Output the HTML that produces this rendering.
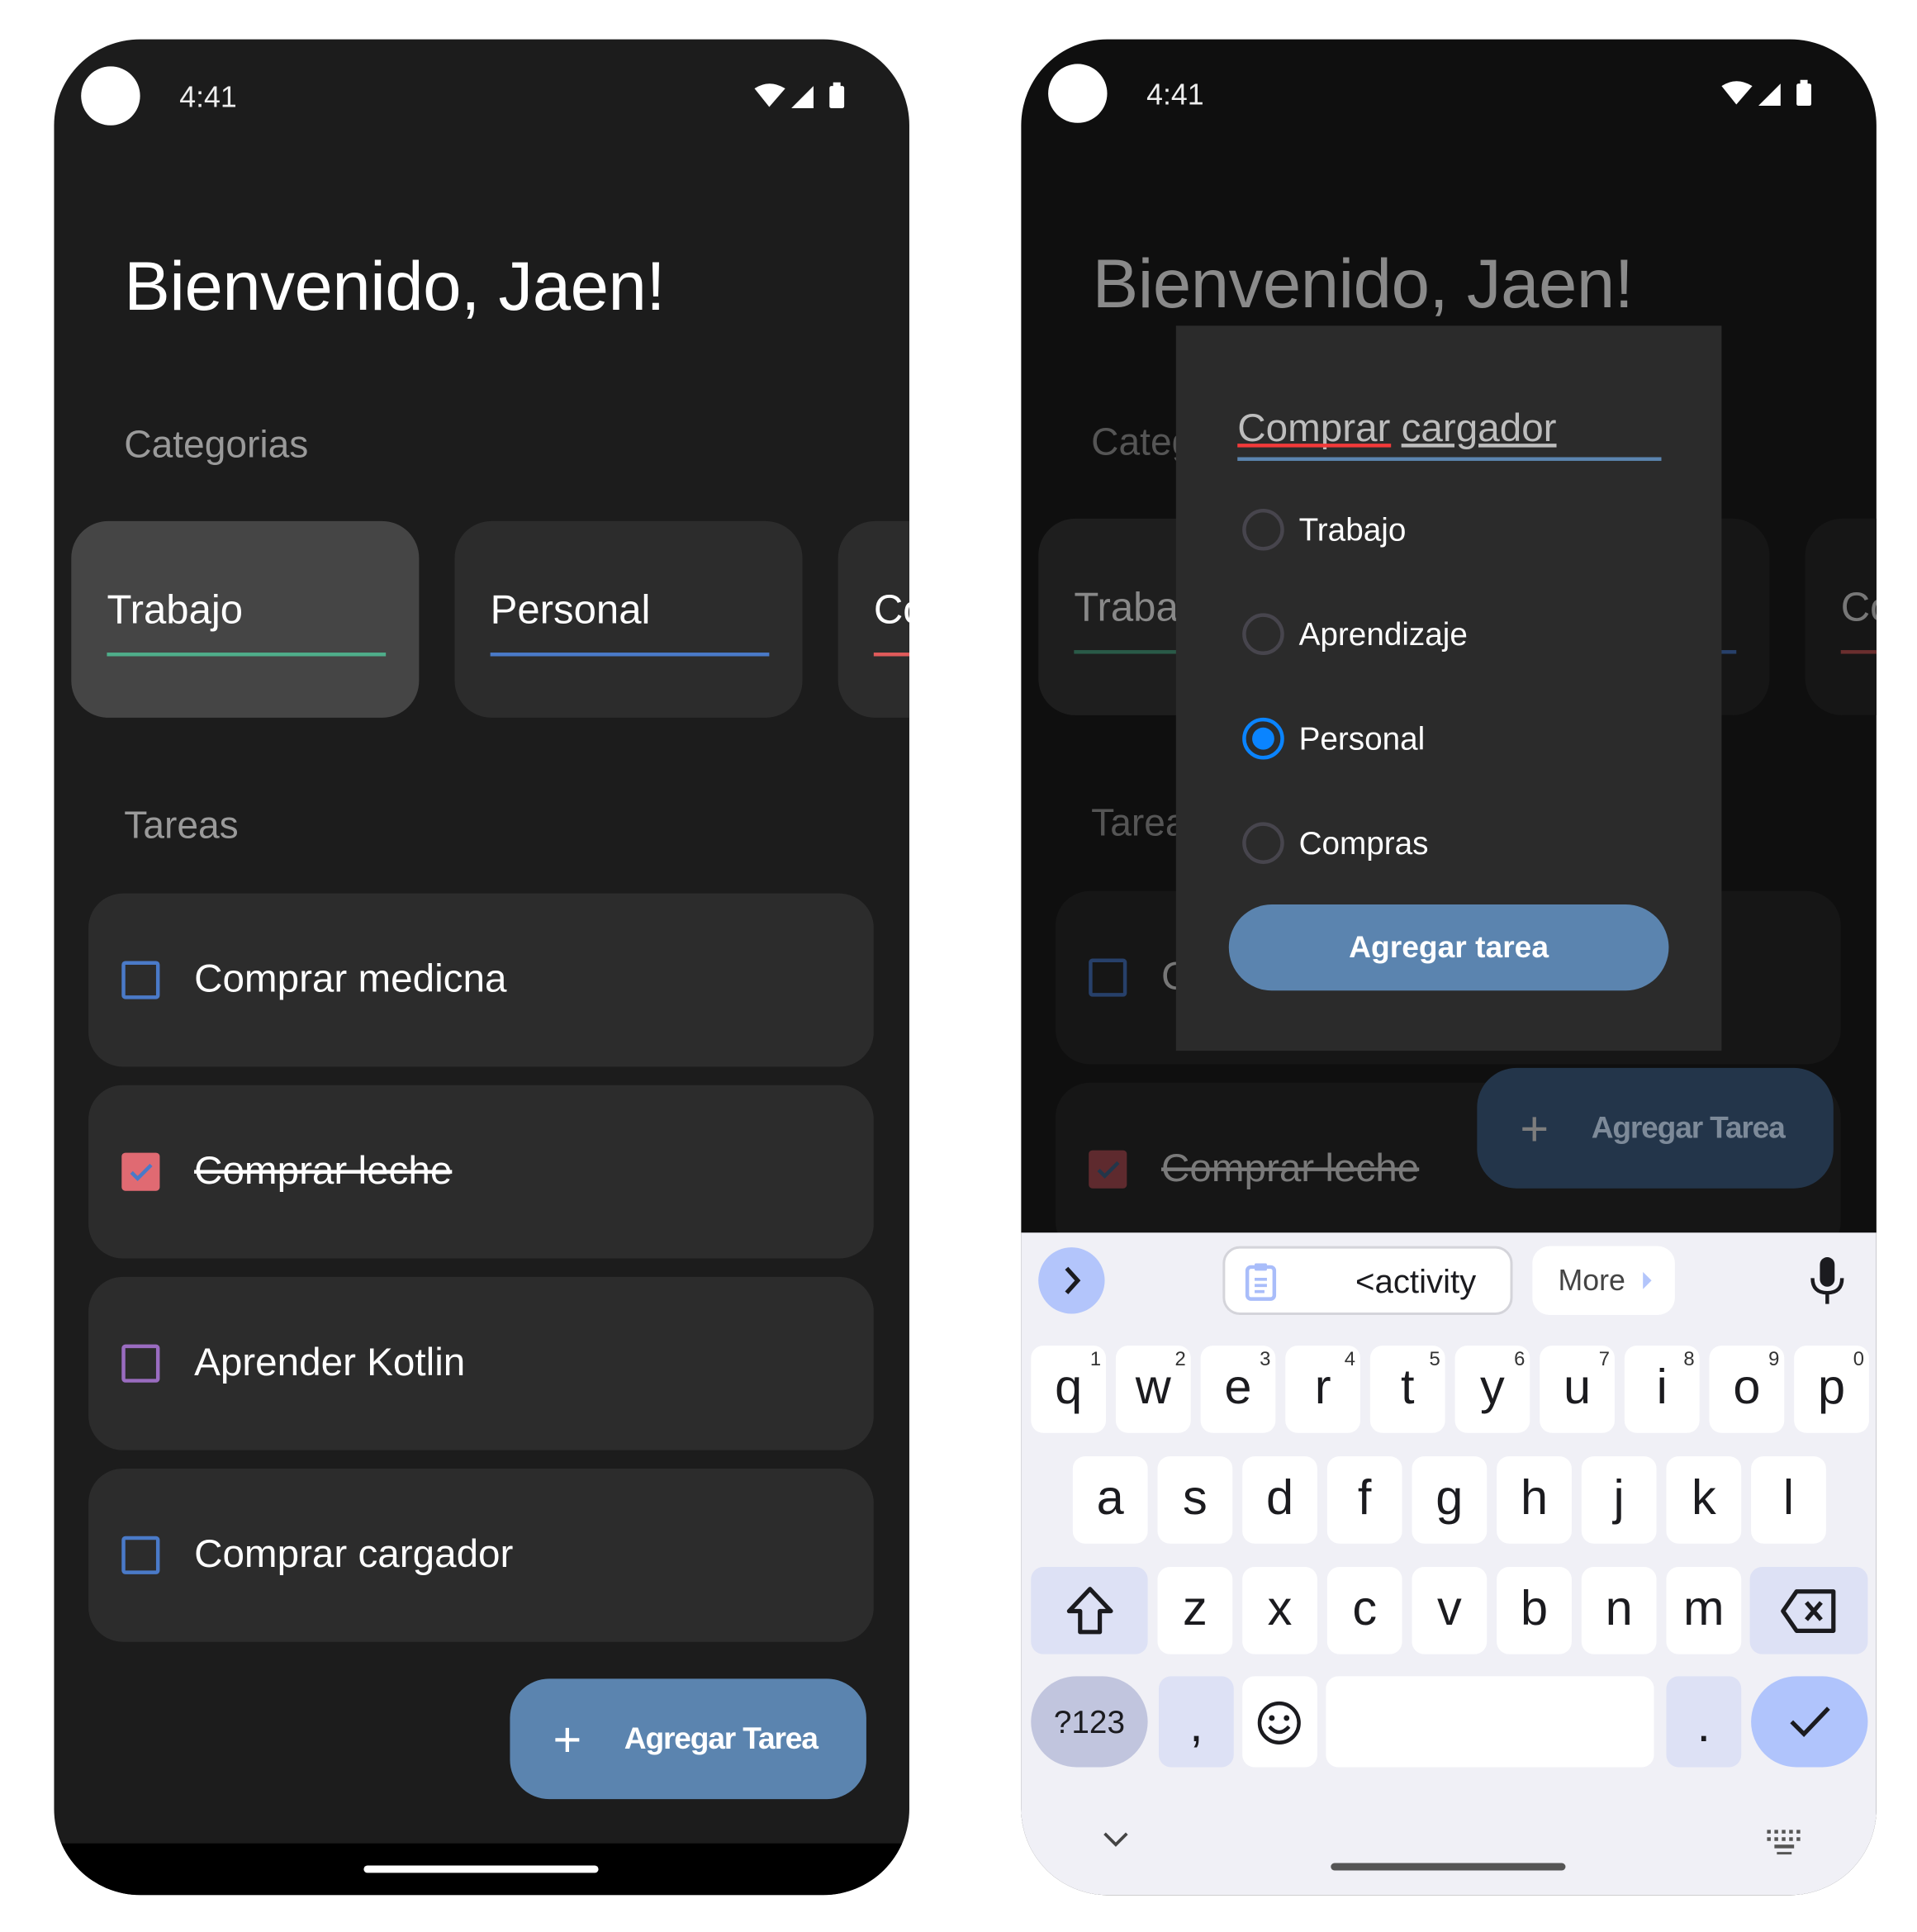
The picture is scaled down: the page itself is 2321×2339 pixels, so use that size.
<!DOCTYPE html>
<html><head><meta charset="utf-8">
<style>
*{margin:0;padding:0;box-sizing:border-box}
html,body{width:2321px;height:2336px;overflow:hidden;background:#fff}
#w{position:absolute;left:0;top:3px;width:1560px;height:1570px;transform:scale(1.4878);transform-origin:0 0;font-family:"Liberation Sans",Arial,sans-serif}
.a{position:absolute}
.phone{position:absolute;top:30px;width:696px;height:1510px;border-radius:70px;overflow:hidden}
.t{position:absolute;white-space:nowrap;line-height:1}
.key{position:absolute;background:#fff;border-radius:10px;width:61px;height:71px;color:#1b1b1f;font-size:40px;text-align:center;line-height:68px}
.key sup{position:absolute;right:4px;top:4px;font-size:16px;line-height:1;color:#333}
.fab{letter-spacing:-0.8px}
</style></head><body><div id="w">

<!-- LEFT PHONE -->
<div class="phone" style="left:44px;background:#1c1c1c">
  <div class="a" style="left:22px;top:22px;width:48px;height:48px;border-radius:50%;background:#fff"></div>
  <div class="t" style="left:102px;top:36px;font-size:24px;color:#eee">4:41</div>
  <svg class="a" style="left:568px;top:34px" width="84" height="26" viewBox="0 0 84 26">
    <path d="M2 6 Q14 -2 27 6 L14 21 Z" fill="#fff"/>
    <path d="M32 22 L50 4 L50 22 Z" fill="#fff"/>
    <rect x="63" y="4" width="12" height="18" rx="1.5" fill="#fff"/><rect x="66" y="1" width="6" height="4" fill="#fff"/>
  </svg>
  <div class="t" style="left:57px;top:173px;font-size:56px;color:#fff;letter-spacing:-0.3px">Bienvenido, Jaen!</div>
  <div class="t" style="left:57px;top:314px;font-size:31px;color:#9a9a9a">Categorias</div>

  <div class="a" style="left:14px;top:392px;width:283px;height:160px;border-radius:30px;background:#454545"></div>
  <div class="t" style="left:43px;top:447px;font-size:33px;color:#fff">Trabajo</div>
  <div class="a" style="left:43px;top:499px;width:227px;height:3px;background:#4fae8a"></div>

  <div class="a" style="left:326px;top:392px;width:283px;height:160px;border-radius:30px;background:#2c2c2c"></div>
  <div class="t" style="left:355px;top:447px;font-size:33px;color:#fff">Personal</div>
  <div class="a" style="left:355px;top:499px;width:227px;height:3px;background:#4a7ac8"></div>

  <div class="a" style="left:638px;top:392px;width:283px;height:160px;border-radius:30px;background:#2c2c2c"></div>
  <div class="t" style="left:667px;top:447px;font-size:33px;color:#fff">Co</div>
  <div class="a" style="left:667px;top:499px;width:227px;height:3px;background:#e05a5a"></div>

  <div class="t" style="left:57px;top:624px;font-size:31px;color:#9a9a9a">Tareas</div>

  <div class="a" style="left:28px;top:695px;width:639px;height:141px;border-radius:28px;background:#2c2c2c"></div>
  <div class="a" style="left:55px;top:750px;width:31px;height:31px;border:3px solid #4a7ac8;border-radius:3px"></div>
  <div class="t" style="left:114px;top:748px;font-size:32px;color:#fff">Comprar medicna</div>

  <div class="a" style="left:28px;top:851px;width:639px;height:141px;border-radius:28px;background:#2c2c2c"></div>
  <div class="a" style="left:55px;top:906px;width:31px;height:31px;background:#e06a72;border-radius:3px"></div>
  <svg class="a" style="left:55px;top:906px" width="31" height="31"><path d="M8 16 L13 21 L24 10" stroke="#4a7ac8" stroke-width="3" fill="none"/></svg>
  <div class="t" style="left:114px;top:904px;font-size:32px;color:#fff;text-decoration:line-through">Comprar leche</div>

  <div class="a" style="left:28px;top:1007px;width:639px;height:141px;border-radius:28px;background:#2c2c2c"></div>
  <div class="a" style="left:55px;top:1062px;width:31px;height:31px;border:3px solid #9a6cc0;border-radius:3px"></div>
  <div class="t" style="left:114px;top:1060px;font-size:32px;color:#fff">Aprender Kotlin</div>

  <div class="a" style="left:28px;top:1163px;width:639px;height:141px;border-radius:28px;background:#2c2c2c"></div>
  <div class="a" style="left:55px;top:1218px;width:31px;height:31px;border:3px solid #4a7ac8;border-radius:3px"></div>
  <div class="t" style="left:114px;top:1216px;font-size:32px;color:#fff">Comprar cargador</div>

  <div class="a" style="left:371px;top:1334px;width:290px;height:98px;border-radius:32px;background:#5b84af"></div>
  <div class="t" style="left:406px;top:1364px;font-size:40px;color:#fff">+</div>
  <div class="t fab" style="left:464px;top:1371px;font-size:25px;color:#fff;font-weight:bold">Agregar Tarea</div>

  <div class="a" style="left:0;top:1468px;width:696px;height:42px;background:#000"></div>
  <div class="a" style="left:252px;top:1486px;width:191px;height:6px;border-radius:3px;background:#fff"></div>
</div>

<!-- RIGHT PHONE -->
<div class="phone" style="left:831px;background:#0f0f0f">
  <div class="a" style="left:22px;top:20px;width:48px;height:48px;border-radius:50%;background:#fff"></div>
  <div class="t" style="left:102px;top:34px;font-size:24px;color:#eee">4:41</div>
  <svg class="a" style="left:568px;top:32px" width="84" height="26" viewBox="0 0 84 26">
    <path d="M2 6 Q14 -2 27 6 L14 21 Z" fill="#fff"/>
    <path d="M32 22 L50 4 L50 22 Z" fill="#fff"/>
    <rect x="63" y="4" width="12" height="18" rx="1.5" fill="#fff"/><rect x="66" y="1" width="6" height="4" fill="#fff"/>
  </svg>
  <div class="t" style="left:58px;top:171px;font-size:56px;color:#8a8a8a;letter-spacing:-0.3px">Bienvenido, Jaen!</div>
  <div class="t" style="left:57px;top:312px;font-size:31px;color:#555">Categorias</div>

  <div class="a" style="left:14px;top:390px;width:283px;height:160px;border-radius:30px;background:#1e1e1e"></div>
  <div class="t" style="left:43px;top:445px;font-size:33px;color:#888">Trabajo</div>
  <div class="a" style="left:43px;top:497px;width:227px;height:3px;background:#2a5a48"></div>
  <div class="a" style="left:326px;top:390px;width:283px;height:160px;border-radius:30px;background:#161616"></div>
  <div class="a" style="left:355px;top:497px;width:227px;height:3px;background:#27406a"></div>
  <div class="a" style="left:638px;top:390px;width:283px;height:160px;border-radius:30px;background:#161616"></div>
  <div class="t" style="left:667px;top:445px;font-size:33px;color:#777">Co</div>
  <div class="a" style="left:667px;top:497px;width:227px;height:3px;background:#6a2e2e"></div>

  <div class="t" style="left:57px;top:622px;font-size:31px;color:#555">Tareas</div>
  <div class="a" style="left:28px;top:693px;width:639px;height:141px;border-radius:28px;background:#161616"></div>
  <div class="a" style="left:55px;top:748px;width:31px;height:31px;border:3px solid #27406a;border-radius:3px"></div>
  <div class="t" style="left:114px;top:746px;font-size:32px;color:#777">Comprar medicna</div>
  <div class="a" style="left:28px;top:849px;width:639px;height:141px;border-radius:28px;background:#161616"></div>
  <div class="a" style="left:55px;top:904px;width:31px;height:31px;background:#5e2a2e;border-radius:3px"></div>
  <svg class="a" style="left:55px;top:904px" width="31" height="31"><path d="M8 16 L13 21 L24 10" stroke="#23364a" stroke-width="3" fill="none"/></svg>
  <div class="t" style="left:114px;top:902px;font-size:32px;color:#7a7a7a;text-decoration:line-through">Comprar leche</div>

  <div class="a" style="left:371px;top:837px;width:290px;height:98px;border-radius:32px;background:#23354a"></div>
  <div class="t" style="left:406px;top:867px;font-size:40px;color:#7d7d7d">+</div>
  <div class="t fab" style="left:464px;top:874px;font-size:25px;color:#7d8a99;font-weight:bold">Agregar Tarea</div>

  <!-- dialog -->
  <div class="a" style="left:126px;top:233px;width:444px;height:590px;background:#2b2b2b"></div>
  <div class="t" style="left:176px;top:300px;font-size:32px;color:#bdbdbd">Comprar <span style="text-decoration:underline">cargador</span></div>
  <div class="a" style="left:176px;top:329px;width:125px;height:3px;background:#f23a3a"></div>
  <div class="a" style="left:176px;top:340px;width:345px;height:3px;background:#5b84af"></div>

  <div class="a" style="left:180px;top:382px;width:34px;height:34px;border:3px solid #47454d;border-radius:50%"></div>
  <div class="t" style="left:226px;top:386px;font-size:26px;color:#fff">Trabajo</div>
  <div class="a" style="left:180px;top:467px;width:34px;height:34px;border:3px solid #47454d;border-radius:50%"></div>
  <div class="t" style="left:226px;top:471px;font-size:26px;color:#fff">Aprendizaje</div>
  <div class="a" style="left:180px;top:552px;width:34px;height:34px;border:3px solid #0a84ff;border-radius:50%"></div>
  <div class="a" style="left:188px;top:560px;width:18px;height:18px;background:#0a84ff;border-radius:50%"></div>
  <div class="t" style="left:226px;top:556px;font-size:26px;color:#fff">Personal</div>
  <div class="a" style="left:180px;top:637px;width:34px;height:34px;border:3px solid #47454d;border-radius:50%"></div>
  <div class="t" style="left:226px;top:641px;font-size:26px;color:#fff">Compras</div>

  <div class="a" style="left:169px;top:704px;width:358px;height:70px;border-radius:35px;background:#5b84af"></div>
  <div class="t" style="left:169px;top:727px;width:358px;text-align:center;font-size:25px;color:#fff;font-weight:bold">Agregar tarea</div>

  <!-- keyboard -->
  <div class="a" style="left:0;top:971px;width:696px;height:539px;background:#f0f0f6"></div>
  <div class="a" style="left:14px;top:983px;width:54px;height:54px;border-radius:50%;background:#b3c5fb"></div>
  <svg class="a" style="left:14px;top:983px" width="54" height="54"><path d="M23 17 L32 27 L23 37" stroke="#1b1b1f" stroke-width="3.5" fill="none"/></svg>
  <div class="a" style="left:164px;top:982px;width:236px;height:56px;border-radius:14px;background:#fff;border:2px solid #d4d4da"></div>
  <svg class="a" style="left:181px;top:994px" width="30" height="34"><rect x="3" y="5" width="22" height="26" rx="3" fill="none" stroke="#a9bdfa" stroke-width="3"/><rect x="9" y="2" width="10" height="6" rx="1" fill="#a9bdfa"/><path d="M9 15h10M9 20h10M9 25h8" stroke="#a9bdfa" stroke-width="2.5"/></svg>
  <div class="t" style="left:272px;top:998px;font-size:27px;color:#1b1b1f">&lt;activity</div>
  <div class="a" style="left:416px;top:982px;width:116px;height:56px;border-radius:14px;background:#fff"></div>
  <div class="t" style="left:437px;top:999px;font-size:24px;color:#444">More</div>
  <svg class="a" style="left:505px;top:1002px" width="10" height="16"><path d="M1 1 L8 8 L1 15Z" fill="#b3c5fb"/></svg>
  <svg class="a" style="left:640px;top:990px" width="32" height="40"><rect x="10" y="1" width="12" height="24" rx="6" fill="#1b1b1f"/><path d="M4 18 Q4 30 16 30 Q28 30 28 18" stroke="#1b1b1f" stroke-width="3" fill="none"/><path d="M16 30v9" stroke="#1b1b1f" stroke-width="3"/></svg>

  <div class="key" style="left:8px;top:1063px">q<sup>1</sup></div>
  <div class="key" style="left:77px;top:1063px">w<sup>2</sup></div>
  <div class="key" style="left:146px;top:1063px">e<sup>3</sup></div>
  <div class="key" style="left:215px;top:1063px">r<sup>4</sup></div>
  <div class="key" style="left:284px;top:1063px">t<sup>5</sup></div>
  <div class="key" style="left:353px;top:1063px">y<sup>6</sup></div>
  <div class="key" style="left:422px;top:1063px">u<sup>7</sup></div>
  <div class="key" style="left:491px;top:1063px">i<sup>8</sup></div>
  <div class="key" style="left:560px;top:1063px">o<sup>9</sup></div>
  <div class="key" style="left:629px;top:1063px">p<sup>0</sup></div>
  <div class="key" style="left:42px;top:1153px">a</div>
  <div class="key" style="left:111px;top:1153px">s</div>
  <div class="key" style="left:180px;top:1153px">d</div>
  <div class="key" style="left:249px;top:1153px">f</div>
  <div class="key" style="left:318px;top:1153px">g</div>
  <div class="key" style="left:387px;top:1153px">h</div>
  <div class="key" style="left:456px;top:1153px">j</div>
  <div class="key" style="left:525px;top:1153px">k</div>
  <div class="key" style="left:594px;top:1153px">l</div>
  <div class="key" style="left:8px;top:1243px;width:95px;background:#dde1f5"></div>
  <svg class="a" style="left:36px;top:1258px" width="40" height="42"><path d="M20 3 L37 21 L28 21 L28 38 L12 38 L12 21 L3 21 Z" stroke="#1b1b1f" stroke-width="3.5" fill="none" stroke-linejoin="round"/></svg>
  <div class="key" style="left:111px;top:1243px">z</div>
  <div class="key" style="left:180px;top:1243px">x</div>
  <div class="key" style="left:249px;top:1243px">c</div>
  <div class="key" style="left:318px;top:1243px">v</div>
  <div class="key" style="left:387px;top:1243px">b</div>
  <div class="key" style="left:456px;top:1243px">n</div>
  <div class="key" style="left:525px;top:1243px">m</div>
  <div class="key" style="left:593px;top:1243px;width:96px;background:#dde1f5"></div>
  <svg class="a" style="left:618px;top:1260px" width="46" height="38"><path d="M13 3 L43 3 L43 35 L13 35 L2 19 Z" stroke="#1b1b1f" stroke-width="3.5" fill="none" stroke-linejoin="round"/><path d="M21 12 L33 26 M33 12 L21 26" stroke="#1b1b1f" stroke-width="3.5"/></svg>
  <div class="key" style="left:8px;top:1332px;width:95px;height:74px;border-radius:37px;background:#c1c5de;font-size:26px;line-height:74px">?123</div>
  <div class="key" style="left:112px;top:1332px;height:74px;background:#dde1f5;line-height:80px">,</div>
  <div class="key" style="left:180px;top:1332px;height:74px"></div>
  <svg class="a" style="left:191px;top:1351px" width="38" height="38"><circle cx="19" cy="19" r="16" stroke="#1b1b1f" stroke-width="3" fill="none"/><circle cx="13" cy="15" r="2.3" fill="#1b1b1f"/><circle cx="25" cy="15" r="2.3" fill="#1b1b1f"/><path d="M11 22 Q19 31 27 22" stroke="#1b1b1f" stroke-width="3" fill="none"/></svg>
  <div class="key" style="left:248px;top:1332px;width:267px;height:74px"></div>
  <div class="key" style="left:525px;top:1332px;height:74px;background:#dde1f5;line-height:80px">.</div>
  <div class="key" style="left:594px;top:1332px;width:95px;height:74px;border-radius:37px;background:#b0c4fc"></div>
  <svg class="a" style="left:623px;top:1351px" width="38" height="36"><path d="M4 18 L14 28 L34 7" stroke="#1b1b1f" stroke-width="3.5" fill="none"/></svg>

  <svg class="a" style="left:66px;top:1458px" width="22" height="14"><path d="M2 2 L11 11 L20 2" stroke="#444" stroke-width="2.5" fill="none"/></svg>
  <svg class="a" style="left:606px;top:1456px" width="30" height="22"><g fill="#555"><rect x="1" y="1" width="3" height="3"/><rect x="7" y="1" width="3" height="3"/><rect x="13" y="1" width="3" height="3"/><rect x="19" y="1" width="3" height="3"/><rect x="25" y="1" width="3" height="3"/><rect x="1" y="7" width="3" height="3"/><rect x="7" y="7" width="3" height="3"/><rect x="13" y="7" width="3" height="3"/><rect x="19" y="7" width="3" height="3"/><rect x="25" y="7" width="3" height="3"/><rect x="7" y="13" width="16" height="3"/><rect x="9" y="19" width="12" height="2"/></g></svg>
  <div class="a" style="left:252px;top:1484px;width:191px;height:6px;border-radius:3px;background:#555"></div>
</div>

</div></body></html>
